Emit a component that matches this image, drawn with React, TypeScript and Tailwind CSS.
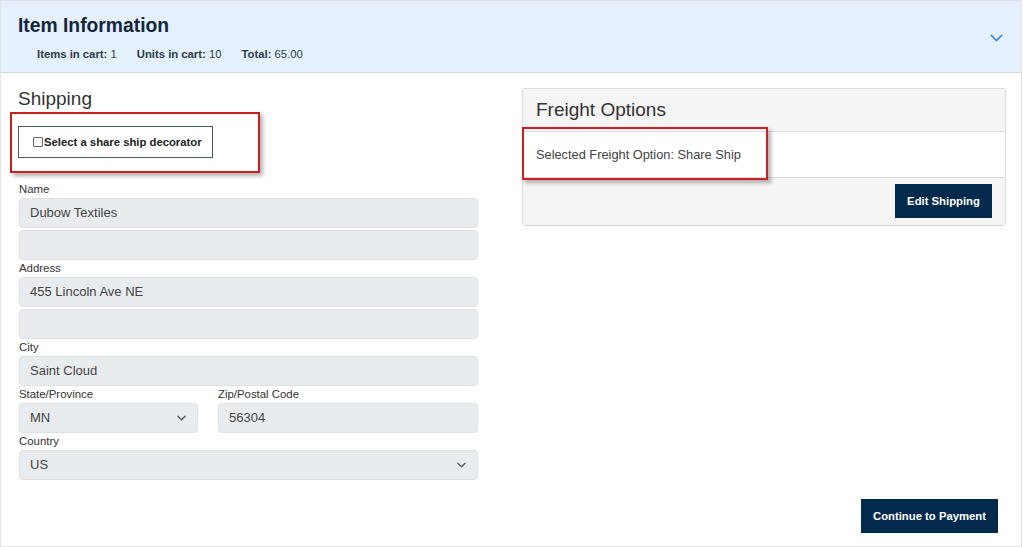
import React from 'react';

const font = { fontFamily: '"Liberation Sans", Arial, sans-serif' };

const Chevron: React.FC<{ className?: string }> = ({ className }) => (
  <svg viewBox="0 0 10 6" className={className} fill="none" stroke="currentColor" strokeWidth="1.4" strokeLinecap="round" strokeLinejoin="round">
    <path d="M1 1l4 4 4-4" />
  </svg>
);

const Label: React.FC<{ children: React.ReactNode }> = ({ children }) => (
  <div className="h-[17px] leading-[17px] text-[11.4px] text-[#333]">{children}</div>
);

const Field: React.FC<{ value?: string; select?: boolean; className?: string }> = ({ value = '', select, className = '' }) => (
  <div className={`h-[30px] flex items-center justify-between bg-[#e9ecef] border border-[#dde1e5] rounded-[4px] pl-[10px] pr-[11px] text-[13px] text-[#444] ${className}`}>
    <span>{value}</span>
    {select && <Chevron className="w-[9px] h-[6px] text-[#555]" />}
  </div>
);

export default function App() {
  return (
    <div style={font} className="relative w-[1022px] h-[547px] bg-white border border-[#e3e3e3] overflow-hidden">
      {/* header */}
      <div className="h-[72px] bg-[#e4f0fc] border-b border-[#cfd6dd] flex items-start justify-between pl-[17px] pr-[18px]">
        <div className="pt-[13px]">
          <div className="text-[19.3px] leading-6 font-bold text-[#13263a]">Item Information</div>
          <div className="flex gap-[20px] pl-[19px] mt-[8px] text-[11.3px] text-[#2c3c4d]">
            <span><b>Items in cart:</b> 1</span>
            <span><b>Units in cart:</b> 10</span>
            <span><b>Total:</b> 65.00</span>
          </div>
        </div>
        <Chevron className="w-[13px] h-[8px] mt-[33px] text-[#4a8fdb]" />
      </div>

      <div className="flex pl-[17px]">
        {/* left column */}
        <div className="w-[460px]">
          <div className="pt-[14px] text-[19px] leading-6 text-[#333]">Shipping</div>
          <div className="mt-[15px] w-[195px] h-[32px] border border-[#4d5a66] flex items-center pl-[14px] text-[11.3px] font-bold text-[#222]">
            <span className="w-[10px] h-[10px] border border-[#666] rounded-[1px] mr-[1px]" />
            Select a share ship decorator
          </div>
          <div className="mt-[23px] pl-[1px]">
            <Label>Name</Label>
            <Field value="Dubow Textiles" />
            <Field className="mt-[2px]" />
            <Label>Address</Label>
            <Field value="455 Lincoln Ave NE" />
            <Field className="mt-[2px]" />
            <Label>City</Label>
            <Field value="Saint Cloud" />
            <div className="flex gap-[20px]">
              <div className="w-[179px]">
                <Label>State/Province</Label>
                <Field value="MN" select />
              </div>
              <div className="flex-1">
                <Label>Zip/Postal Code</Label>
                <Field value="56304" />
              </div>
            </div>
            <Label>Country</Label>
            <Field value="US" select />
          </div>
        </div>

        {/* right column */}
        <div className="ml-[44px] w-[484px] pt-[15px]">
          <div className="border border-[#dcdcdc] rounded-[3px] overflow-hidden">
            <div className="h-[43px] bg-[#f5f5f5] border-b border-[#dcdcdc] flex items-center px-[13px] text-[19px] text-[#333]">Freight Options</div>
            <div className="h-[46px] bg-white border-b border-[#dcdcdc] flex items-center px-[13px] text-[12.8px] text-[#444]">Selected Freight Option: Share Ship</div>
            <div className="h-[47px] bg-[#f5f5f5] flex justify-end items-start pt-[6px] pr-[13px]">
              <button className="w-[97px] h-[34px] bg-[#022a4c] text-white text-[11.3px] font-bold">Edit Shipping</button>
            </div>
          </div>
        </div>
      </div>

      <div className="flex justify-end pr-[23px] mt-[19px]">
        <button className="w-[137px] h-[34px] bg-[#022a4c] text-white text-[11.3px] font-bold">Continue to Payment</button>
      </div>

      {/* annotation boxes */}
      <div className="absolute left-[9px] top-[111px] w-[250px] h-[61px] border-2 border-[#cc1f1f] shadow-[3px_3px_4px_rgba(0,0,0,0.3)]" />
      <div className="absolute left-[521px] top-[126px] w-[246px] h-[53px] border-2 border-[#cc1f1f] shadow-[3px_3px_4px_rgba(0,0,0,0.3)]" />
    </div>
  );
}
